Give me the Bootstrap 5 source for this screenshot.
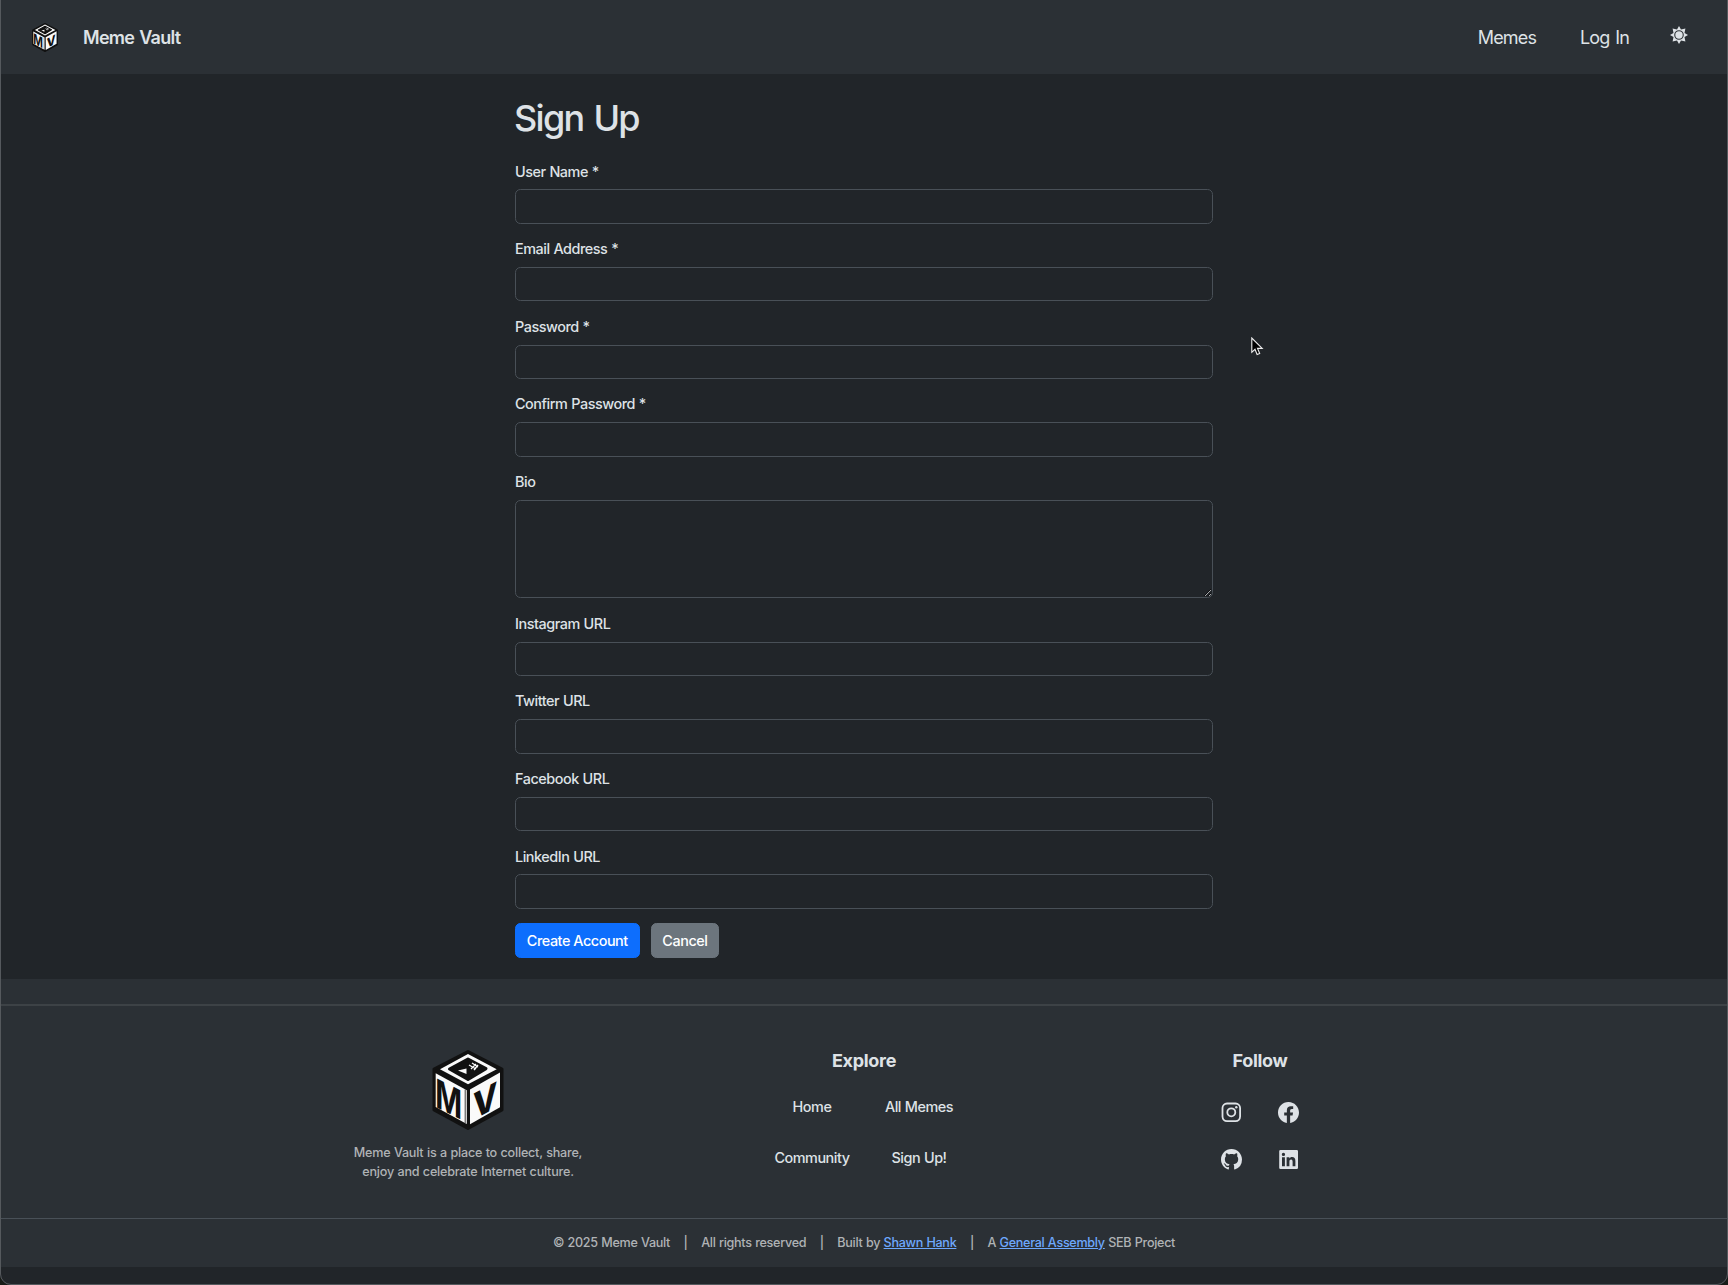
<!DOCTYPE html>
<html lang="en" data-bs-theme="dark">
<head>
<meta charset="utf-8">
<meta name="viewport" content="width=device-width, initial-scale=1">
<title>Meme Vault | Sign Up</title>
<link href="https://cdn.jsdelivr.net/npm/bootstrap@5.3.0/dist/css/bootstrap.min.css" rel="stylesheet">
<style>
  html { font-size: 14.4px; background: #212529; }
  body { height: 1285px; font-family: Inter, "Liberation Sans", sans-serif; font-weight: 450; color: #dee2e6; background: #212529; letter-spacing: -.45px; word-spacing: .4px; overflow: hidden; }
  .window-edge { position: absolute; inset: -12px 0 0; border: 1px solid #55595d; border-radius: 0 0 11px 11px; box-shadow: 0 0 0 12px #181c18; pointer-events: none; z-index: 5; }
  .site-nav { height: 74px; padding: 0 40px 0 32px; background: #2b3035; }
  .site-nav a { color: #dee2e6; font-size: 18px; font-weight: 400; text-decoration: none; letter-spacing: -.85px; word-spacing: 1.5px; }
  .site-nav .brand-name { font-weight: 600; margin-left: 25px; letter-spacing: -.7px; word-spacing: 1px; }
  .nav-login { margin-left: 44px; }
  .sun { margin: -4px 0 0 41px; }
  .signup-form { width: 698px; }
  .signup-form h1 { color: #dee2e6; font-size: 36px; font-weight: 550; line-height: 43px; margin: 0 0 20.6px -1px; letter-spacing: -1.7px; word-spacing: 2px; }
  .signup-form .form-label { display: block; margin-bottom: 7.25px; line-height: 21.6px; }
  .signup-form .form-control { border-color: #495057; border-radius: 5.4px; background: #212529; }
  .signup-form textarea.form-control { height: 98.6px; }
  .signup-form .btn { font-size: 14.4px; font-weight: 450; letter-spacing: -.45px; border-radius: 5.4px; padding: 5.4px 10.8px; }
  .button-row { gap: 11px; }
  .page-main { height: 905px; padding-top: 23px; }
  .site-footer { background: #2b3035; height: 288px; }
  .footer-top { height: 25px; }
  .footer-main { height: 215px; border-top: 2px solid #3d4246; border-bottom: 1px solid #495057; }
  .footer-inner { width: 1188px; padding-top: 44px; }
  .footer-inner h5 { color: #dee2e6; font-size: 18px; font-weight: 650; line-height: 22px; margin: 0; letter-spacing: -.3px; }
  .footer-inner a { color: #dee2e6; text-decoration: none; }
  .fine { font-size: 12.6px; line-height: 18.9px; color: #b0b3b6; letter-spacing: -.22px; }
  .fine a { color: #6ea8fe; }
  .tagline { margin-top: 14px; }
  .legal { padding-top: 15px; gap: 13.5px; letter-spacing: -.3px; }
  .link-grid { display: grid; grid-template-columns: 107px 107px; row-gap: 29px; margin: 24px 0 0 3px; line-height: 22px; justify-content: center; }
  .icon-grid { display: grid; grid-template-columns: 21px 21px; gap: 26px 36px; margin: 29.5px 0 0 -1px; justify-content: center; }
  .icon-grid svg, .sun { display: block; fill: #dee2e6; }
  .cube-logo { flex: none; overflow: visible; }
  .pointer { position: absolute; left: 1251px; top: 337px; }
</style>
<script src="https://cdn.jsdelivr.net/npm/bootstrap@5.3.0/dist/js/bootstrap.bundle.min.js"></script>
</head>
<body class="position-relative">

<nav class="site-nav d-flex align-items-center">
  <svg class="cube-logo" width="26" height="29" viewBox="0 0 72 80">
    <g id="cube">
      <path d="M36 1.5 70 19v41L36 78.5 2 60V19Z" fill="#111" stroke="#111" stroke-width="3" stroke-linejoin="round"/>
      <path d="M36 4 64.7 19.3 36 34.3 8 19.3Z" fill="#fafafa"/>
      <path d="M36 9 54 18.6 36 29.5 17.500 19Z" fill="#111" stroke="#111" stroke-width="3" stroke-linejoin="round"/>
      <path d="M26 20.500 34.500 18.500 34.500 24Z" fill="#fafafa"/>
      <path d="M37 15l7 4M40 13l6 4M39 19l5-5M42 20l4-5" stroke="#fafafa" stroke-width="1.300"/>
      <path d="M3.700 23.300 34.800 40.300V74L3.700 57Z" fill="#fafafa"/>
      <path d="M38 39.500 68 22.500V57.300L38 74.300Z" fill="#fafafa"/>
      <path d="M33.200 39.500v33.500" stroke="#111" stroke-width=".8"/>
      <text transform="matrix(.72 .36 0 1 3.300 56.800)" font-size="40" font-weight="750" font-family="Inter, sans-serif" fill="#111" letter-spacing="0">M</text>
      <text transform="matrix(.88 -.466 0 1 41 70)" font-size="36" font-weight="800" font-family="Inter, sans-serif" fill="#111" letter-spacing="0">V</text>
    </g>
  </svg>
  <a href="#" class="brand-name">Meme Vault</a>
  <a href="#" class="ms-auto">Memes</a>
  <a href="#" class="nav-login">Log In</a>
  <svg class="sun" width="18" height="18" viewBox="0 0 18 18">
    <path fill-rule="evenodd" d="M9 0 11 3.500 15.400 2.600 14.500 7 18 9 14.500 11 15.400 15.400 11 14.500 9 18 7 14.500 2.600 15.400 3.500 11 0 9 3.500 7 2.600 2.600 7 3.500ZM9 4.200a4.800 4.800 0 1 0 0 9.600a4.800 4.800 0 1 0 0-9.600Z"/>
    <circle cx="9" cy="9" r="3.700"/>
  </svg>
</nav>

<main class="page-main">
  <form class="signup-form mx-auto">
    <h1>Sign Up</h1>
    <div class="mb-3"><label class="form-label">User Name *</label><input class="form-control" type="text"></div>
    <div class="mb-3"><label class="form-label">Email Address *</label><input class="form-control" type="text"></div>
    <div class="mb-3"><label class="form-label">Password *</label><input class="form-control" type="password"></div>
    <div class="mb-3"><label class="form-label">Confirm Password *</label><input class="form-control" type="password"></div>
    <div class="mb-3"><label class="form-label">Bio</label><textarea class="form-control"></textarea></div>
    <div class="mb-3"><label class="form-label">Instagram URL</label><input class="form-control" type="text"></div>
    <div class="mb-3"><label class="form-label">Twitter URL</label><input class="form-control" type="text"></div>
    <div class="mb-3"><label class="form-label">Facebook URL</label><input class="form-control" type="text"></div>
    <div class="mb-3"><label class="form-label">LinkedIn URL</label><input class="form-control" type="text"></div>
    <div class="button-row d-flex"><button type="button" class="btn btn-primary">Create Account</button><button type="button" class="btn btn-secondary">Cancel</button></div>
  </form>
</main>

<footer class="site-footer">
  <div class="footer-top"></div>
  <div class="footer-main">
    <div class="footer-inner mx-auto d-flex text-center">
      <div class="col-4">
        <svg class="cube-logo d-block mx-auto" width="72" height="80" viewBox="0 0 72 80"><use href="#cube"/></svg>
        <div class="fine tagline">Meme Vault is a place to collect, share,<br>enjoy and celebrate Internet culture.</div>
      </div>
      <div class="col-4">
        <h5>Explore</h5>
        <div class="link-grid"><a href="#">Home</a><a href="#">All Memes</a><a href="#">Community</a><a href="#">Sign Up!</a></div>
      </div>
      <div class="col-4">
        <h5>Follow</h5>
        <div class="icon-grid">
          <svg width="21" height="21" viewBox="0 0 21 21"><rect x="1.500" y="1.500" width="17.600" height="17.600" rx="4.500" fill="none" stroke="#dee2e6" stroke-width="1.800"/><circle cx="10.300" cy="10.300" r="4" fill="none" stroke="#dee2e6" stroke-width="1.800"/><circle cx="15.300" cy="5.300" r="1.200"/></svg>
          <svg width="21" height="21" viewBox="0 0 16 16"><path d="M16 8.049c0-4.446-3.582-8.050-8-8.050C3.580 0-.002 3.603-.002 8.050c0 4.017 2.926 7.347 6.750 7.951v-5.625h-2.030V8.050H6.750V6.275c0-2.017 1.195-3.131 3.022-3.131.876 0 1.791.157 1.791.157v1.980h-1.009c-.993 0-1.303.621-1.303 1.258v1.510h2.218l-.354 2.326H9.250V16c3.824-.604 6.750-3.934 6.750-7.951z"/></svg>
          <svg width="21" height="21" viewBox="0 0 16 16"><path d="M8 0C3.580 0 0 3.580 0 8c0 3.540 2.290 6.530 5.470 7.590.4.070.55-.17.55-.38 0-.19-.01-.82-.01-1.490-2.010.37-2.530-.49-2.690-.94-.09-.23-.48-.94-.82-1.130-.28-.15-.68-.52-.01-.53.63-.01 1.080.58 1.230.82.72 1.210 1.870.87 2.330.66.07-.52.28-.87.51-1.070-1.780-.2-3.640-.89-3.640-3.950 0-.87.31-1.590.82-2.150-.08-.2-.36-1.020.08-2.120 0 0 .67-.21 2.200.82.64-.18 1.320-.27 2-.27s1.360.09 2 .27c1.530-1.040 2.200-.82 2.200-.82.44 1.100.16 1.920.08 2.120.51.56.82 1.270.82 2.150 0 3.070-1.870 3.750-3.650 3.950.29.25.54.73.54 1.480 0 1.070-.01 1.930-.01 2.200 0 .21.15.46.55.38A8.010 8.010 0 0 0 16 8c0-4.420-3.580-8-8-8z"/></svg>
          <svg width="21" height="21" viewBox="0 0 21 21"><path fill-rule="evenodd" d="M2.500 1h16.200A1.300 1.300 0 0 1 20 2.300v16.400A1.300 1.300 0 0 1 18.700 20H2.500A1.300 1.300 0 0 1 1.200 18.700V2.300A1.300 1.300 0 0 1 2.500 1ZM4 8.200v9h2.900v-9ZM5.450 3.800a1.650 1.650 0 1 0 0 3.300a1.650 1.650 0 1 0 0-3.300ZM8.600 8.200v9h2.800v-4.500c0-1.300.5-2.200 1.700-2.200s1.500 1 1.500 2.300v4.400h2.800v-5c0-2.800-1.100-4.200-3.300-4.200-1.400 0-2.200.7-2.700 1.500V8.200Z"/></svg>
        </div>
      </div>
    </div>
  </div>
  <div class="fine legal d-flex justify-content-center"><span>© 2025 Meme Vault</span><span>|</span><span>All rights reserved</span><span>|</span><span>Built by <a href="#">Shawn Hank</a></span><span>|</span><span>A <a href="#">General Assembly</a> SEB Project</span></div>
</footer>

<svg class="pointer" width="13" height="20" viewBox="0 0 13 20"><path d="M.8 1v14.300l3.200-3 2.100 5.200 2.600-1-2.200-5.100h4.700Z" fill="#000" stroke="#eee" stroke-width="1.100"/></svg>
<div class="window-edge"></div>
</body>
</html>
